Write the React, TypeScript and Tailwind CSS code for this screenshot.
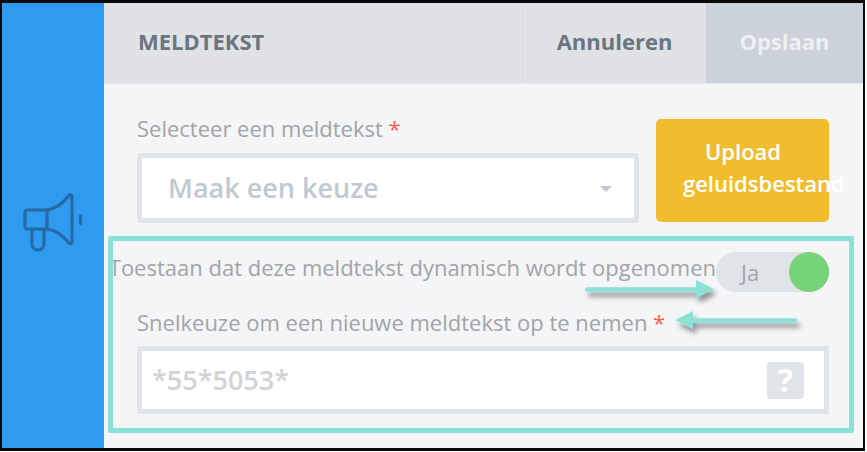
export default function App() {
  return (
    <div className="relative w-[867px] h-[452px] bg-white overflow-hidden font-['Open_Sans',sans-serif]">
      <div className="flex w-[865px] h-[451px] border-t-[3px] border-b-[3px] border-x-2 border-[#0a0a0a] overflow-hidden">
        <aside className="w-[102px] shrink-0 bg-[#2f9bf0] flex items-center justify-center pb-[8px]">
          <svg width="60" height="60" viewBox="0 0 60 60" fill="none" stroke="#2569a5" strokeWidth="3.2" strokeLinecap="round" strokeLinejoin="round">
            <path d="M4.500 18H24C33 17 40 11 46 3.500c1-1.300 3-.8 3 1V50c0 1.800-2 2.300-3 1C40 43.500 33 38 24 37H4.500C3 37 2 36 2 34.500v-14C2 19 3 18 4.500 18z" />
            <path d="M24 18v19" />
            <path d="M9 37v15c0 3.500 2.500 6 6 6s6-2.500 6-6V37" />
            <path d="M57.500 23.500v8" />
          </svg>
        </aside>
        <main className="flex-1 flex flex-col bg-[#f4f5f7] min-w-0">
          <header className="h-[81px] shrink-0 flex bg-[#e0e2e6] border-b border-[#e6e8eb]">
            <div className="flex-1 flex items-center pl-[34px] pb-[3px] text-[22px] font-bold text-[#6b7580]">MELDTEKST</div>
            <div className="w-[184px] flex items-center justify-center pb-[3px] border-l border-[#d8dade] text-[22px] font-bold text-[#6b7580]">Annuleren</div>
            <div className="w-[157px] flex items-center justify-center pb-[3px] bg-[#cbd2da] text-[22px] font-bold text-[#eef0f3]">Opslaan</div>
          </header>
          <div className="flex flex-col pl-[33px] w-[725px] text-[#a1a4a9]">
            <div className="flex gap-[17px] mt-[35px]">
              <div className="flex-1 min-w-0">
                <div className="text-[22px] leading-[30px] h-[34px] -mt-[6px] mb-[6px]">
                  Selecteer een meldtekst <span className="text-[#f4604f]">*</span>
                </div>
                <div className="h-[70px] border-[5px] border-[#e0e3e8] bg-white rounded-[3px] flex items-center justify-between pl-[26px] pr-[22px]">
                  <span className="text-[27px] font-semibold text-[#bfc9d4]">Maak een keuze</span>
                  <span className="w-0 h-0 border-x-[6px] border-x-transparent border-t-[6px] border-t-[#bfc9d4] mt-[2px]" />
                </div>
              </div>
              <div className="w-[173px] h-[103px] shrink-0 bg-[#f1bd2e] rounded-[5px] text-white text-[22px] font-semibold leading-[32px] pt-[16px] whitespace-nowrap">
                <div className="pl-[49px]">Upload</div>
                <div className="pl-[27px]">geluidsbestand</div>
              </div>
            </div>
            <div className="flex items-center justify-end mt-[29px] h-[40px]">
              <span className="text-[22px] whitespace-nowrap pb-[10px]">Toestaan dat deze meldtekst dynamisch wordt opgenomen</span>
              <div className="w-[113px] h-[40px] shrink-0 rounded-full bg-[#e0e3e8] flex items-center justify-between pl-[25px]">
                <span className="text-[22px]">Ja</span>
                <span className="w-[40px] h-[40px] rounded-full bg-[#77d377]" />
              </div>
            </div>
            <div className="text-[22px] leading-[30px] mt-[15px]">
              Snelkeuze om een nieuwe meldtekst op te nemen <span className="text-[#f4604f]">*</span>
            </div>
            <div className="h-[68px] mt-[9px] border-[5px] border-[#e0e3e8] bg-white flex items-center justify-between pl-[10px] pr-[20px]">
              <span className="text-[27px] font-semibold text-[#d0d3d8]">*55*5053*</span>
              <span className="w-[37px] h-[37px] rounded-[4px] bg-[#e0e3e8] text-white text-[32px] font-bold flex items-center justify-center">?</span>
            </div>
          </div>
        </main>
      </div>
      <div className="absolute left-[108px] top-[236px] w-[746px] h-[197px] border-[5px] border-[#8be0d8] rounded-[2px]" />
      <svg className="absolute left-0 top-0 pointer-events-none" width="867" height="452" fill="none">
        <defs>
          <filter id="arrow-shadow" x="-20%" y="-100%" width="140%" height="400%">
            <feDropShadow dx="3" dy="5" stdDeviation="2.500" floodColor="#000" floodOpacity="0.4" />
          </filter>
        </defs>
        <g filter="url(#arrow-shadow)">
          <path d="M587 289.500H700" stroke="#8be0d8" strokeWidth="4.500" strokeLinecap="round" />
          <path d="M696 280L714 289L696 298Z" fill="#8be0d8" />
        </g>
        <g filter="url(#arrow-shadow)">
          <path d="M795 320.500H690" stroke="#8be0d8" strokeWidth="4.500" strokeLinecap="round" />
          <path d="M693 311L675 320L693 329Z" fill="#8be0d8" />
        </g>
      </svg>
    </div>
  );
}
